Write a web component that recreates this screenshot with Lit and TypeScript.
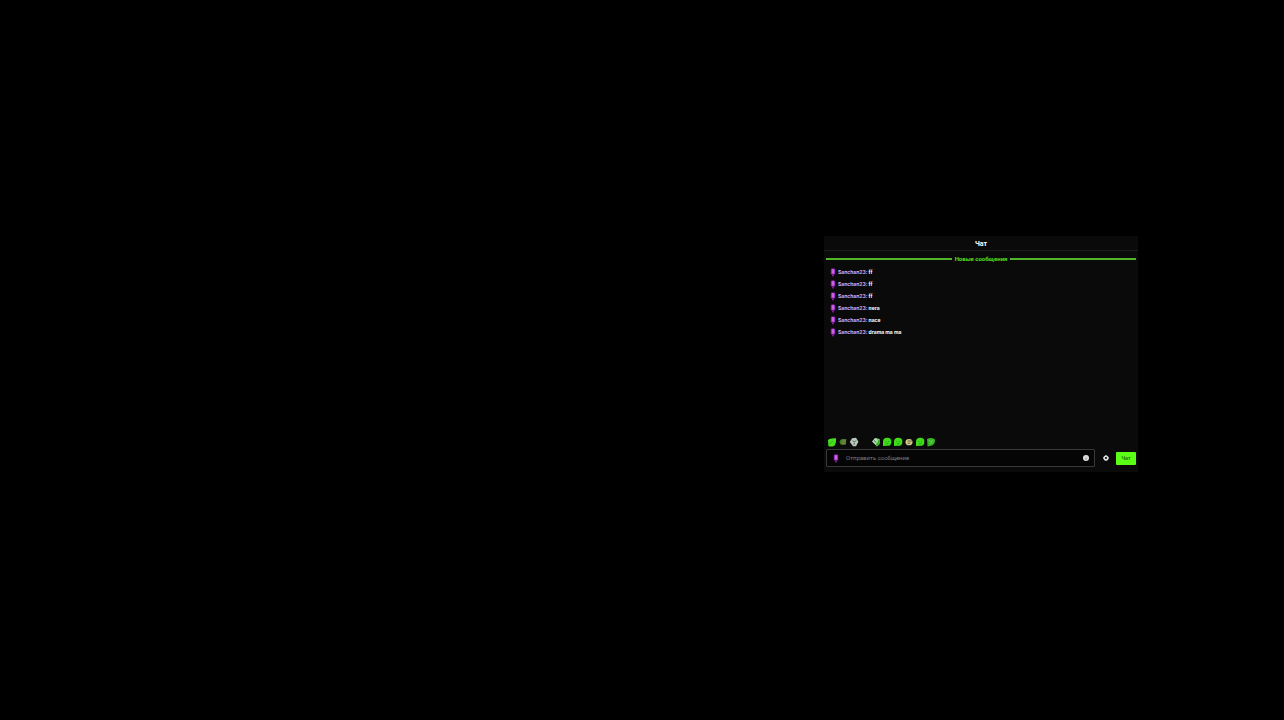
import { LitElement, html, svg, css } from "lit";
import { customElement, state } from "lit/decorators.js";

interface Message {
  author: string;
  text: string;
}

type Emote = "leaf" | "frog" | "skull" | "none" | "mixed" | "bubble" | "face" | "wink";

const mic = html`<svg class="mic" viewBox="0 0 6 10" aria-hidden="true">
  <rect x="0.6" y="0.5" width="4.8" height="6.8" rx="1.6" fill="#a02bc2" />
  <rect x="2" y="1" width="2" height="5.4" rx="1" fill="#cc6fe0" />
  <path d="M1.6 7h2.8l-.6 2.5h-1.6z" fill="#7c1c98" />
</svg>`;

@customElement("app-root")
export class AppRoot extends LitElement {
  static styles = css`
    :host {
      display: grid;
      grid-template-columns: 824fr 314fr 146fr;
      grid-template-rows: 236fr auto 248fr;
      min-height: 100vh;
      background: #000;
      font-family: Inter, "Noto Sans", sans-serif;
      color: #fff;
    }
    .chat {
      grid-area: 2 / 2;
      display: flex;
      flex-direction: column;
      min-height: 236px;
      box-sizing: border-box;
      background: #0a0a0b;
    }
    .title {
      margin: 0;
      padding: 2px 0 0;
      border-bottom: 1px solid #1b1b20;
      font-family: Roboto, "Noto Sans", sans-serif;
      font-size: 7px;
      line-height: 12px;
      font-weight: 700;
      text-align: center;
    }
    .divider {
      display: flex;
      align-items: center;
      gap: 3px;
      padding: 3px 2px 0;
      color: #53e01c;
      font-family: Roboto, "Noto Sans", sans-serif;
      font-size: 6px;
      line-height: 10px;
      font-weight: 700;
    }
    .divider::before,
    .divider::after {
      content: "";
      flex: 1;
      height: 2px;
      background: #4fb52b;
    }
    .messages {
      flex: 1;
      list-style: none;
      margin: 0;
      padding: 2px 6px;
      font-size: 5px;
      line-height: 12px;
      font-weight: 700;
    }
    .message {
      display: flex;
      align-items: center;
      gap: 2px;
    }
    .author {
      color: #dcaef0;
    }
    .mic {
      width: 6px;
      height: 9px;
      flex: none;
    }
    .emotes {
      display: flex;
      gap: 1px;
      padding: 0 3px 2px;
    }
    .emote {
      width: 10px;
      height: 10px;
      padding: 0;
      border: 0;
      background: none;
    }
    .emote svg,
    .icon svg {
      display: block;
      width: 100%;
      height: 100%;
    }
    .composer {
      display: flex;
      align-items: center;
      padding: 0 2px 5px;
    }
    .field {
      flex: 1;
      display: flex;
      align-items: center;
      gap: 7px;
      box-sizing: border-box;
      height: 18px;
      padding: 0 5px 0 6px;
      border: 1px solid #39393c;
      border-radius: 1px;
      background: #050506;
    }
    .input {
      flex: 1;
      min-width: 0;
      padding: 0;
      border: 0;
      outline: 0;
      background: none;
      color: #fff;
      font: 400 6px/10px Roboto, "Noto Sans", sans-serif;
    }
    .input::placeholder {
      color: #7c7c80;
      opacity: 1;
    }
    .icon {
      width: 6px;
      height: 6px;
      flex: none;
      padding: 0;
      border: 0;
      background: none;
    }
    .settings {
      margin: 0 7px 0 8px;
    }
    .send {
      width: 20px;
      height: 13px;
      padding: 0;
      border: 0;
      border-radius: 1px;
      background: #5cff16;
      color: #196008;
      font: 600 5px/13px Inter, "Noto Sans", sans-serif;
    }
  `;

  @state() private messages: Message[] = [
    { author: "Sanchan23", text: "ff" },
    { author: "Sanchan23", text: "ff" },
    { author: "Sanchan23", text: "ff" },
    { author: "Sanchan23", text: "пега" },
    { author: "Sanchan23", text: "пасе" },
    { author: "Sanchan23", text: "drama ma ma" },
  ];

  private emotes: Emote[] = [
    "leaf", "frog", "skull", "none", "mixed", "bubble", "bubble", "face", "bubble", "wink",
  ];

  private drawEmote(kind: Emote) {
    switch (kind) {
      case "leaf":
        return svg`<path d="M1 3Q3 .8 9 1.2 9.4 7 7 9 4 10 1.4 9Z" fill="#46df1d"/><path d="M2.5 7 6 4" stroke="#2b9c14" stroke-width=".8"/>`;
      case "frog":
        return svg`<path d="M1.5 5Q2 2 5 2h3.2L8 7.6 4 8Q1.8 7.6 1.5 5Z" fill="#4c7a28"/><path d="M4 4h4M4 6.2h3.4" stroke="#8b9658" stroke-width=".8"/>`;
      case "skull":
        return svg`<path d="M.8 5 3 1.2 7 .8l2.4 4L7 9.2H4Z" fill="#b9c8bd"/><path d="m3.5 3.6 2 1.6L7 3.4M5.2 6v1.8" stroke="#48594f" stroke-width=".9" fill="none"/>`;
      case "mixed":
        return svg`<path d="M1 4.5 4 1l4.5 1L9 6 6 9.4Z" fill="#b4dcb2"/><path d="M6.4 1.5 9 4v3L6 9.3 4.6 7.6 7 5Z" fill="#32b321"/><path d="m3 3.5 2.4 2" stroke="#3e6945"/>`;
      case "face":
        return svg`<ellipse cx="5" cy="5.2" rx="3.5" ry="3.1" fill="#d3cd8c"/><path d="M3.6 4h4.4M3.4 6.2h3" stroke="#4d4824" stroke-width=".8"/>`;
      case "bubble":
        return svg`<path d="M1 9V4.5a4.2 4 0 1 1 4.2 4.3Z" fill="#3edc1b"/><path d="M3.4 4.6h1M6 4.6h1M4 6.6h2.5" stroke="#209413" stroke-width=".7"/>`;
      case "wink":
        return svg`<path d="M1 2Q5-.2 9 2.4 9.4 7 6 8.4L1.6 9.4Z" fill="#35b51f"/><path d="m3 3 3 2.4M6.8 2.8 4.4 7" stroke="#8ad07a" stroke-width=".7"/>`;
      default:
        return svg``;
    }
  }

  render() {
    return html`
      <section class="chat" aria-labelledby="title">
        <h1 class="title" id="title">Чат</h1>
        <div class="divider">Новые сообщения</div>
        <ul class="messages">
          ${this.messages.map(
            (m) => html`<li class="message">${mic}<span><span class="author">${m.author}:</span> ${m.text}</span></li>`
          )}
        </ul>
        <div class="emotes">
          ${this.emotes.map(
            (e) => html`<button class="emote" type="button" aria-label=${e}>
              <svg viewBox="0 0 10 10">${this.drawEmote(e)}</svg>
            </button>`
          )}
        </div>
        <form class="composer" @submit=${(e: Event) => e.preventDefault()}>
          <div class="field">
            ${mic}
            <input class="input" type="text" aria-label="Отправить сообщение" placeholder="Отправить сообщение" />
            <button class="icon" type="button" aria-label="Эмоции">
              <svg viewBox="0 0 6 6"><circle cx="3" cy="3" r="3" fill="#e4e4e4" /><path d="M1.8 2.2h.6M3.6 2.2h.6M1.8 3.7q1.2 1 2.4 0" stroke="#55555a" stroke-width=".6" fill="none" /></svg>
            </button>
          </div>
          <button class="icon settings" type="button" aria-label="Настройки">
            <svg viewBox="0 0 6 6"><circle cx="3" cy="3" r="1.8" fill="none" stroke="#dededf" stroke-width="1.5" /><path d="M3 0v1M3 5v1M0 3h1M5 3h1" stroke="#dededf" /></svg>
          </button>
          <button class="send" type="submit">Чат</button>
        </form>
      </section>
    `;
  }
}
